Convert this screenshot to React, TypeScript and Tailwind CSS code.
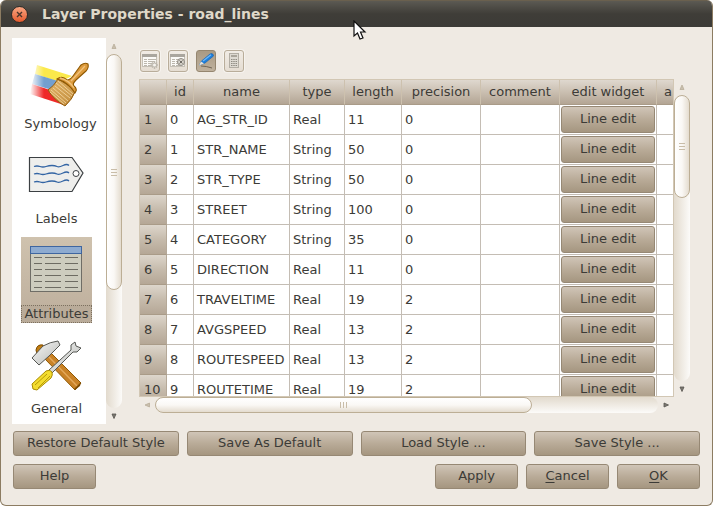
import React from "react";

type Field = { name: string; type: string; length: number; precision: number };

const fields: Field[] = [
  { name: "AG_STR_ID", type: "Real", length: 11, precision: 0 },
  { name: "STR_NAME", type: "String", length: 50, precision: 0 },
  { name: "STR_TYPE", type: "String", length: 50, precision: 0 },
  { name: "STREET", type: "String", length: 100, precision: 0 },
  { name: "CATEGORY", type: "String", length: 35, precision: 0 },
  { name: "DIRECTION", type: "Real", length: 11, precision: 0 },
  { name: "TRAVELTIME", type: "Real", length: 19, precision: 2 },
  { name: "AVGSPEED", type: "Real", length: 13, precision: 2 },
  { name: "ROUTESPEED", type: "Real", length: 13, precision: 2 },
  { name: "ROUTETIME", type: "Real", length: 19, precision: 2 },
];

const raised =
  "rounded-[3px] border border-[#968874] bg-linear-to-b from-[#d0c5b7] via-[#b9ab98] to-[#a59680]";

function PushButton({ children, className = "" }: { children: React.ReactNode; className?: string }) {
  return (
    <button type="button" className={`${raised} h-[25px] whitespace-nowrap pb-px ${className}`}>
      {children}
    </button>
  );
}

function BrushIcon() {
  return (
    <svg width="61" height="60" viewBox="0 -13 61 60" aria-hidden="true">
      <defs>
        <linearGradient id="fade" x1="0" x2="1">
          <stop offset="0" stopColor="#fff" />
          <stop offset="1" stopColor="#fff" stopOpacity="0" />
        </linearGradient>
        <linearGradient id="bristle" x1="0" y1="0" x2="1" y2="1">
          <stop offset="0" stopColor="#e2b468" />
          <stop offset="1" stopColor="#c08a3a" />
        </linearGradient>
      </defs>
      <path d="M7 3 L42 14 L30 20 L5 12 Z" fill="#fbe94b" />
      <path d="M5 12 L28 19 L22 28 L2 22 Z" fill="#729fcf" />
      <path d="M2 22 L20 28 L34 43 L0 32 Z" fill="#ef2929" />
      <path d="M0 0 H14 V40 H0 Z" fill="url(#fade)" />
      <path d="M18 28 Q24 24 28 17 L46 28 Q42 38 35 44 Q24 38 18 28 Z" fill="url(#bristle)" stroke="#935c0c" />
      <path d="M21 28 L36 41 M23 26 L38 39 M25 24 L40 36 M26 21 L42 34 M28 19 L43 32 M20 30 L34 42" stroke="#f5dba6" strokeWidth="0.800" />
      <path
        d="M27 17 Q32 13 37 18 Q40 18 43 14 L51 3 Q55 0 58 2 Q59 6 56 9 L46 18 Q42 22 44 24 Q48 27 45 31 Q38 20 27 17 Z"
        fill="#dc9a3c"
        stroke="#8f5902"
        strokeWidth="1.100"
      />
      <path d="M41 19 L55 4 M30 16 Q39 18 44 26" fill="none" stroke="#f1c27a" strokeWidth="1.300" />
    </svg>
  );
}

function TagIcon() {
  return (
    <svg width="61" height="60" viewBox="-2 -8 61 60" aria-hidden="true">
      <path d="M1.500 5.500 H44 L55 21 L44 39.500 H1.500 Z" fill="#eeeeec" stroke="#3c4043" strokeWidth="1.200" />
      <circle cx="48" cy="21.500" r="3" fill="#fff" stroke="#3c4043" />
      {[14.5, 22, 30].map((y) => (
        <path key={y} d={`M6 ${y} q3 -1 6 0 t6 0 t6 -1 t5 1 t6 -1 t6 0`} fill="none" stroke="#3465a4" strokeWidth="1.300" />
      ))}
    </svg>
  );
}

function TableIcon() {
  return (
    <svg width="61" height="60" viewBox="-4 -7 61 60" aria-hidden="true">
      <rect x="0.500" y="0.500" width="51" height="45" fill="#cdccbe" stroke="#6f6d66" />
      <rect x="0.500" y="0.500" width="51" height="7" fill="#8eabd0" stroke="#3f66a0" />
      {[11.5, 17.5, 23.5, 29.5, 35.5, 41.5].map((y) => (
        <path key={y} d={`M4 ${y}h8M15 ${y}h16M35 ${y}h13`} stroke="#6d6b62" />
      ))}
    </svg>
  );
}

function ToolsIcon() {
  return (
    <svg width="61" height="60" viewBox="-5 -6 61 60" aria-hidden="true">
      <defs>
        <linearGradient id="steel" x1="0" y1="0" x2="1" y2="1">
          <stop offset="0" stopColor="#fafafa" />
          <stop offset="1" stopColor="#b5b7b3" />
        </linearGradient>
      </defs>
      <path d="M5 10 Q6 4 12 5 L13 8 L6 14 Z" fill="#c17d11" stroke="#7b4a02" />
      <path d="M14 19 L20 13 L50 43 L44 50 Z" fill="#c98227" stroke="#8f5902" />
      <path d="M18 17 L47 47" stroke="#e3a85a" strokeWidth="1.500" />
      <path d="M43 49 L50 42 L49 46 L44 50 Z" fill="#7b4a02" />
      <path d="M1 18 L12 6 Q19 2 27 1 L29 5 L18 16 L8 25 Z" fill="url(#steel)" stroke="#555753" />
      <path d="M18 30 L40 10 L40 5 L44 2 L45 6 L50 8 L46 12 L42 12 L21 33 Z" fill="url(#steel)" stroke="#555753" />
      <path d="M1 44 L15 31 Q19 29 21 32 Q22 35 20 38 L6 50 L2 49 Z" fill="#f3dc2e" stroke="#a98b00" />
      <path d="M4 45 L16 34 M7 48 L19 36" stroke="#b79a08" />
    </svg>
  );
}

function NewColumnIcon({ remove = false }: { remove?: boolean }) {
  return (
    <svg width="16" height="16" viewBox="0 0 16 16" aria-hidden="true">
      <rect x="0.500" y="2.500" width="14" height="11" fill="#fbfaf7" stroke="#c5c0b6" />
      <rect x="0" y="1" width="15" height="3" fill="#aaa69e" />
      <path d="M2 6.500h3M6 6.500h8M2 8.500h3M6 8.500h6M2 10.500h3M6 10.500h4M2 12.500h3M6 12.500h4" stroke="#bcb7ad" />
      {remove ? (
        <>
          <circle cx="11" cy="9" r="3.500" fill="#d5d1c9" stroke="#8f8b84" />
          <path d="M9.500 7.500l3 3M12.500 7.500l-3 3" stroke="#6f6b64" />
        </>
      ) : (
        <>
          <path d="M12.500 8v8M8.500 12h7.500M10 9.500l5 5M15 9.500l-5 5" stroke="#bdb8ae" strokeWidth="1.500" />
          <circle cx="12.500" cy="12" r="1.500" fill="#f6f4ef" />
        </>
      )}
    </svg>
  );
}

function PencilIcon() {
  return (
    <svg width="16" height="16" viewBox="0 0 16 16" aria-hidden="true">
      <path d="M3 13 Q8 13 14 15" fill="none" stroke="#6f6555" />
      <path d="M1.500 12 L3.500 8 L12 1 Q15 -0.500 15.500 3 L7 10 Z" fill="#1c7fdd" stroke="#125fae" strokeWidth="0.600" />
      <path d="M5 8 L13 1.800" stroke="#6db8f7" strokeWidth="1.300" />
      <path d="M1 12.500 L3 8.500 L6 10.500 Z" fill="#e8e4dc" />
    </svg>
  );
}

function CalculatorIcon() {
  return (
    <svg width="16" height="16" viewBox="0 0 16 16" aria-hidden="true">
      <rect x="3.500" y="0.500" width="9" height="14" fill="#dedad2" stroke="#b2ada3" />
      <rect x="5" y="2" width="6" height="2" fill="#aaa59b" />
      <path d="M5 6.500h6M5 8.500h6M5 10.500h6M5 12.500h6" stroke="#8f8b82" strokeDasharray="1.500 0.750" />
    </svg>
  );
}

function Arrow({ dir, dim = false }: { dir: "up" | "down" | "left" | "right"; dim?: boolean }) {
  const shapes = { up: "M4 2L6 6.500H2Z", down: "M4 6.500L6 2H2Z", left: "M2 4L6.500 2V6Z", right: "M6.500 4L2 2V6Z" };
  return (
    <button type="button" aria-label={`Scroll ${dir}`} className="flex size-4 shrink-0 items-center justify-center">
      <svg width="8" height="8" viewBox="0 0 8 8" aria-hidden="true">
        <path d={shapes[dir]} fill={dim ? "#c9bfae" : "#7d7a73"} stroke={dim ? "#b9ad99" : "#55534e"} strokeWidth="0.800" />
      </svg>
    </button>
  );
}

function VerticalBar({ thumb }: { thumb: string }) {
  return (
    <div className="flex w-4 shrink-0 flex-col">
      <Arrow dir="up" dim />
      <div className="min-h-0 flex-1 rounded-[8px] bg-linear-to-r from-[#e2dacd] to-[#fcfbf9]">
        <div
          className={`flex items-center justify-center rounded-[8px] border border-[#bcae95] bg-linear-to-r from-white via-[#faf8f5] to-[#e4dccf] ${thumb}`}
        >
          <span className="h-[7px] w-[6px] border-y border-[#c9bda8]">
            <span className="mt-[2px] block h-px bg-[#c9bda8]" />
          </span>
        </div>
      </div>
      <Arrow dir="down" />
    </div>
  );
}

function HorizontalBar() {
  return (
    <div className="mr-4 flex h-4 shrink-0">
      <Arrow dir="left" dim />
      <div className="min-w-0 flex-1 rounded-[8px] bg-linear-to-b from-[#e2dacd] to-[#fcfbf9]">
        <div className="flex h-4 w-3/4 items-center justify-center rounded-[8px] border border-[#bcae95] bg-linear-to-b from-white via-[#faf8f5] to-[#e4dccf]">
          <span className="flex h-[6px] w-[7px] justify-center border-x border-[#c9bda8]">
            <span className="w-px bg-[#c9bda8]" />
          </span>
        </div>
      </div>
      <Arrow dir="right" />
    </div>
  );
}

function Page({
  label,
  icon,
  width = "w-[71px]",
  selected = false,
}: {
  label: string;
  icon: React.ReactNode;
  width?: string;
  selected?: boolean;
}) {
  return (
    <button
      type="button"
      aria-pressed={selected}
      className={`flex h-[86px] flex-col items-center ${width} ${selected ? "bg-linear-to-b from-[#cfc2ae] to-[#bdae9c]" : ""}`}
    >
      <span className="flex h-[68px] w-full items-center justify-center pb-1">{icon}</span>
      <span
        className={`flex h-[18px] w-full items-center justify-center border border-dotted pb-px ${selected ? "border-[#7c705f] bg-[#b9ab99]" : "border-transparent"}`}
      >
        {label}
      </span>
    </button>
  );
}

function ToolButton({ label, active = false, children }: { label: string; active?: boolean; children: React.ReactNode }) {
  return (
    <button
      type="button"
      aria-label={label}
      className={`flex h-[22px] w-5 items-center justify-center rounded-[3px] border ${active ? "border-[#95866f] bg-linear-to-b from-[#a99a84] to-[#bfb19d]" : "border-[#b9ad9a] bg-linear-to-b from-[#f1ece5] to-[#e5ddd2] shadow-[0_0_0_1px_#f6f3ee]"}`}
    >
      {children}
    </button>
  );
}

const headCell = "border-r border-b border-r-[#cdc1ae] border-b-[#a99b88] bg-linear-to-b from-[#dfd8cf] via-[#cabfb1] to-[#b3a594] p-0 font-normal";
const cell = "h-[30px] border-r border-b border-[#c4bdb4] p-0 pl-[3px]";

function FieldTable() {
  return (
    <table className="w-[700px] table-fixed border-separate border-spacing-0 bg-white leading-4">
      <colgroup>
        <col className="w-[27px]" />
        <col className="w-[27px]" />
        <col className="w-[96px]" />
        <col className="w-[55px]" />
        <col className="w-[57px]" />
        <col className="w-[79px]" />
        <col className="w-[79px]" />
        <col className="w-[97px]" />
        <col />
      </colgroup>
      <thead>
        <tr className="h-[25px]">
          <td className={headCell} />
          {["id", "name", "type", "length", "precision", "comment", "edit widget"].map((h) => (
            <th key={h} scope="col" className={headCell}>
              {h}
            </th>
          ))}
          <th scope="col" className={`${headCell} pl-[7px] text-left`}>
            a
          </th>
        </tr>
      </thead>
      <tbody>
        {fields.map((f, i) => (
          <tr key={f.name}>
            <th
              scope="row"
              className="h-[30px] border-r border-b border-r-[#b5a999] border-b-[#a99b88] bg-linear-to-b from-[#ddd6cc] via-[#c6bbac] to-[#b5a796] p-0 pl-1 text-left font-normal"
            >
              {i + 1}
            </th>
            <td className={cell}>{i}</td>
            <td className={cell}>{f.name}</td>
            <td className={cell}>{f.type}</td>
            <td className={cell}>{f.length}</td>
            <td className={cell}>{f.precision}</td>
            <td className={cell} />
            <td className="h-[30px] border-r border-b border-[#c4bdb4] p-px">
              <button type="button" className={`${raised} block h-[27px] w-full pb-px`}>
                Line edit
              </button>
            </td>
            <td className={cell} />
          </tr>
        ))}
      </tbody>
    </table>
  );
}

export default function App() {
  return (
    <div className="h-screen bg-white font-['DejaVu_Sans',sans-serif] text-[13px] leading-4 text-[#3c3b37]">
      <div className="relative flex h-full flex-col overflow-hidden rounded-[6px] border border-t-0 border-[#8c7c62] bg-[#efeae3]">
        <header className="flex h-[27px] shrink-0 items-center gap-[14px] border-t border-[#6a604e] bg-linear-to-b from-[#5c5a53] via-[#3f3d38] to-[#3c3b37] pl-[10px]">
          <button
            type="button"
            aria-label="Close"
            className="flex size-[17px] items-center justify-center rounded-full border border-[#2e2c28] bg-linear-to-b from-[#f8a581] to-[#e4592b]"
          >
            <svg width="7" height="7" viewBox="0 0 7 7" aria-hidden="true">
              <path d="M1 1l5 5M6 1l-5 5" stroke="#4a352b" strokeWidth="1.400" />
            </svg>
          </button>
          <h1 className="text-[14px] font-bold text-[#dfd8c8]">Layer Properties - road_lines</h1>
        </header>

        <main className="flex min-h-0 flex-1 gap-[17px] pt-[11px] pr-[22px] pl-[11px]">
          <nav aria-label="Pages" className="flex shrink-0">
            <div className="flex w-[94px] flex-col items-start gap-[9px] bg-white pt-[9px] pl-[9px]">
              <Page label="Symbology" width="w-[79px]" icon={<BrushIcon />} />
              <Page label="Labels" icon={<TagIcon />} />
              <Page label="Attributes" icon={<TableIcon />} selected />
              <Page label="General" icon={<ToolsIcon />} />
            </div>
            <VerticalBar thumb="h-2/3" />
          </nav>

          <section className="flex min-w-0 flex-1 flex-col pt-3 pb-[11px]">
            <div className="mb-[7px] flex gap-2 pl-px">
              <ToolButton label="New column">
                <NewColumnIcon />
              </ToolButton>
              <ToolButton label="Delete column">
                <NewColumnIcon remove />
              </ToolButton>
              <ToolButton label="Toggle editing mode" active>
                <PencilIcon />
              </ToolButton>
              <ToolButton label="Field calculator">
                <CalculatorIcon />
              </ToolButton>
            </div>
            <div className="flex min-h-0 flex-1">
              <div className="min-w-0 flex-1 overflow-hidden border border-[#d2c7b4]">
                <FieldTable />
              </div>
              <VerticalBar thumb="h-[36%]" />
            </div>
            <HorizontalBar />
          </section>
        </main>

        <footer className="flex shrink-0 flex-col gap-2 px-3 pt-[7px] pb-4">
          <div className="grid grid-cols-4 gap-2">
            <PushButton>Restore Default Style</PushButton>
            <PushButton>Save As Default</PushButton>
            <PushButton>Load Style ...</PushButton>
            <PushButton>Save Style ...</PushButton>
          </div>
          <div className="flex gap-2">
            <PushButton className="mr-auto w-[83px]">Help</PushButton>
            <PushButton className="w-[83px]">Apply</PushButton>
            <PushButton className="w-[83px]">
              <span className="underline underline-offset-2">C</span>ancel
            </PushButton>
            <PushButton className="w-[83px]">
              <span className="underline underline-offset-2">O</span>K
            </PushButton>
          </div>
        </footer>

        <svg className="absolute top-5 left-[352px]" width="14" height="21" viewBox="0 0 14 21" aria-hidden="true">
          <path d="M1 1 V16 L4.500 13 L7 19 L10 18 L7.500 12 H12 Z" fill="#fff" stroke="#111" strokeWidth="1.200" />
        </svg>
      </div>
    </div>
  );
}
